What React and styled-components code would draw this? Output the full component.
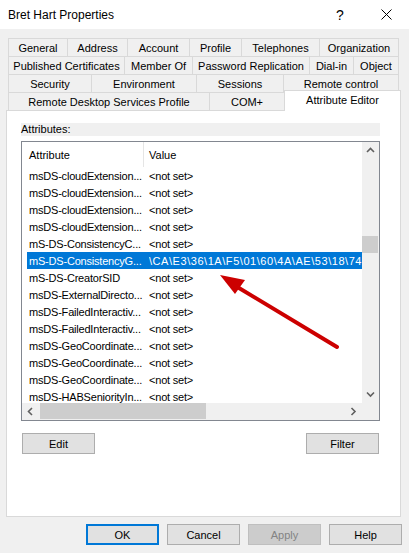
import React from "react";
import styled, { createGlobalStyle, css } from "styled-components";

const GlobalStyle = createGlobalStyle`
  html, body { margin: 0; padding: 0; background: #f0f0f0; }
  body { font-family: "Liberation Sans", Arial, sans-serif; }
`;

const tabRows = [
  [["General", 59], ["Address", 60], ["Account", 62], ["Profile", 52], ["Telephones", 78], ["Organization", 80]],
  [["Published Certificates", 116], ["Member Of", 68], ["Password Replication", 117], ["Dial-in", 44], ["Object", 46]],
  [["Security", 83], ["Environment", 105], ["Sessions", 87], ["Remote control", 116]],
  [["Remote Desktop Services Profile", 201], ["COM+", 75], ["Attribute Editor", 117, true]],
];

const rows = [
  ["msDS-cloudExtension...", "<not set>"],
  ["msDS-cloudExtension...", "<not set>"],
  ["msDS-cloudExtension...", "<not set>"],
  ["msDS-cloudExtension...", "<not set>"],
  ["mS-DS-ConsistencyC...", "<not set>"],
  ["mS-DS-ConsistencyG...", "\\CA\\E3\\36\\1A\\F5\\01\\60\\4A\\AE\\53\\18\\74", true],
  ["mS-DS-CreatorSID", "<not set>"],
  ["msDS-ExternalDirecto...", "<not set>"],
  ["msDS-FailedInteractiv...", "<not set>"],
  ["msDS-FailedInteractiv...", "<not set>"],
  ["msDS-GeoCoordinate...", "<not set>"],
  ["msDS-GeoCoordinate...", "<not set>"],
  ["msDS-GeoCoordinate...", "<not set>"],
  ["msDS-HABSeniorityIn...", "<not set>"],
];

const Chevron = ({ dir }) => {
  const paths = {
    up: "M1 5 L4.5 1.5 L8 5",
    down: "M1 1.5 L4.5 5 L8 1.5",
    left: "M5 1 L1.5 4.5 L5 8",
    right: "M1.5 1 L5 4.5 L1.5 8",
  };
  const horiz = dir === "left" || dir === "right";
  return (
    <svg width={horiz ? 7 : 9} height={horiz ? 9 : 7} viewBox={horiz ? "0 0 7 9" : "0 0 9 7"}>
      <path d={paths[dir]} fill="none" stroke="#606060" strokeWidth="1.6" />
    </svg>
  );
};

export default function App() {
  return (
    <Window>
      <GlobalStyle />
      <TitleBar>
        <Title>Bret Hart Properties</Title>
        <TitleButton>?</TitleButton>
        <TitleButton>
          <svg width="11" height="11" viewBox="0 0 11 11">
            <path d="M0.5 0.5 L10.5 10.5 M10.5 0.5 L0.5 10.5" stroke="#000" strokeWidth="1" />
          </svg>
        </TitleButton>
      </TitleBar>

      <Body>
        <TabStrip>
          {tabRows.map((row, i) => (
            <TabRow key={i}>
              {row.map(([label, w, active]) => (
                <Tab key={label} $w={w} $active={active}>{label}</Tab>
              ))}
            </TabRow>
          ))}
        </TabStrip>

        <Panel>
          <GroupLabel>Attributes:</GroupLabel>
          <ListBox>
            <ListArea>
              <Header>
                <HeaderCell $first>Attribute</HeaderCell>
                <HeaderCell>Value</HeaderCell>
              </Header>
              {rows.map(([name, value, selected], i) => (
                <Row key={i} $selected={selected}>
                  <Cell>{name}</Cell>
                  <Cell $wide={selected}>{value}</Cell>
                </Row>
              ))}
            </ListArea>
            <VScroll>
              <ArrowBox><Chevron dir="up" /></ArrowBox>
              <VTrack>
                <VThumb $offset={77} />
              </VTrack>
              <ArrowBox><Chevron dir="down" /></ArrowBox>
            </VScroll>
            <HScroll>
              <ArrowBox><Chevron dir="left" /></ArrowBox>
              <HTrack>
                <HThumb $offset={1} $size={166} />
              </HTrack>
              <ArrowBox><Chevron dir="right" /></ArrowBox>
            </HScroll>
            <Corner />
          </ListBox>
          <ActionRow>
            <Button>Edit</Button>
            <Button>Filter</Button>
          </ActionRow>
        </Panel>

        <Footer>
          <Button $default>OK</Button>
          <Button>Cancel</Button>
          <Button $disabled>Apply</Button>
          <Button>Help</Button>
        </Footer>
      </Body>

      <Annotation width="409" height="553" viewBox="0 0 409 553">
        <line x1="337" y1="347" x2="234" y2="285" stroke="#cc0000" strokeWidth="4" strokeLinecap="round" />
        <polygon points="220,275 245,280 235,294" fill="#cc0000" />
      </Annotation>
    </Window>
  );
}

const Window = styled.div`
  position: relative;
  width: 409px;
  height: 553px;
  background: #f0f0f0;
  overflow: hidden;
  display: flex;
  flex-direction: column;
`;

const TitleBar = styled.div`
  height: 29px;
  background: #fff;
  display: flex;
  align-items: center;
  padding-left: 8px;
`;

const Title = styled.div`
  flex: 1;
  font-size: 12px;
  color: #000;
`;

const TitleButton = styled.div`
  width: 46px;
  height: 29px;
  display: flex;
  align-items: center;
  justify-content: center;
  font-size: 14px;
  color: #000;
`;

const Body = styled.div`
  padding: 9px 8px 0 6px;
  display: flex;
  flex-direction: column;
`;

const TabStrip = styled.div`
  margin: 0 2px;
  width: 391px;
`;

const TabRow = styled.div`
  display: flex;
  height: 18px;
`;

const Tab = styled.div`
  box-sizing: border-box;
  flex: 0 0 ${(p) => p.$w}px;
  height: 18px;
  border-top: 1px solid #d9d9d9;
  border-left: 1px solid #d9d9d9;
  display: flex;
  align-items: center;
  justify-content: center;
  font-size: 11px;
  color: #000;
  white-space: nowrap;
  &:last-child {
    border-right: 1px solid #d9d9d9;
  }
  ${(p) =>
    p.$active &&
    css`
      height: 21px;
      margin-top: -2px;
      padding-bottom: 3px;
      background: #fff;
      position: relative;
      z-index: 1;
    `}
`;

const Panel = styled.div`
  box-sizing: border-box;
  height: 407px;
  background: #fff;
  border: 1px solid #d9d9d9;
  padding: 12px 20px 0 14px;
  display: flex;
  flex-direction: column;
`;

const GroupLabel = styled.div`
  height: 13px;
  line-height: 13px;
  background: #f0f0f0;
  font-size: 11px;
  color: #000;
`;

const ListBox = styled.div`
  box-sizing: border-box;
  margin-top: 5px;
  height: 280px;
  border: 1px solid #828790;
  background: #fff;
  display: grid;
  grid-template-columns: 1fr 17px;
  grid-template-rows: 1fr 17px;
  overflow: hidden;
`;

const ListArea = styled.div`
  overflow: hidden;
  min-width: 0;
`;

const Header = styled.div`
  height: 25px;
  display: flex;
`;

const HeaderCell = styled.div`
  display: flex;
  align-items: center;
  font-size: 11px;
  color: #000;
  ${(p) =>
    p.$first
      ? css`
          box-sizing: border-box;
          width: 122px;
          padding-left: 7px;
          border-right: 1px solid #e5e5e5;
        `
      : css`
          padding-left: 5px;
        `}
`;

const Row = styled.div`
  display: grid;
  grid-template-columns: 122px 1fr;
  height: 17px;
  margin-left: 5px;
  align-items: center;
  font-size: 11px;
  letter-spacing: -0.2px;
  color: ${(p) => (p.$selected ? "#fff" : "#000")};
  background: ${(p) => (p.$selected ? "#0078d7" : "transparent")};
`;

const Cell = styled.div`
  white-space: nowrap;
  overflow: hidden;
  letter-spacing: ${(p) => (p.$wide ? "0.55px" : "inherit")};
  &:first-child {
    padding-left: 2px;
  }
`;

const VScroll = styled.div`
  background: #f0f0f0;
  display: flex;
  flex-direction: column;
`;

const HScroll = styled.div`
  background: #f0f0f0;
  display: flex;
`;

const Corner = styled.div`
  background: #f0f0f0;
`;

const ArrowBox = styled.div`
  flex: 0 0 17px;
  height: 17px;
  display: flex;
  align-items: center;
  justify-content: center;
`;

const VTrack = styled.div`
  flex: 1;
  display: flex;
  flex-direction: column;
  padding: 0 1px 0 0;
`;

const VThumb = styled.div`
  margin-top: ${(p) => p.$offset}px;
  height: 17px;
  background: #cdcdcd;
`;

const HTrack = styled.div`
  flex: 1;
  display: flex;
  padding: 0 0 1px;
`;

const HThumb = styled.div`
  margin-left: ${(p) => p.$offset}px;
  width: ${(p) => p.$size}px;
  background: #cdcdcd;
`;

const ActionRow = styled.div`
  display: flex;
  justify-content: space-between;
  margin-top: 12px;
  padding: 0 1px;
`;

const Button = styled.div`
  box-sizing: border-box;
  width: 73px;
  height: 21px;
  display: flex;
  align-items: center;
  justify-content: center;
  font-size: 11px;
  color: #000;
  background: #e1e1e1;
  border: 1px solid #adadad;
  ${(p) =>
    p.$default &&
    css`
      border-color: #0078d7;
      box-shadow: inset 0 0 0 1px #0078d7;
    `}
  ${(p) =>
    p.$disabled &&
    css`
      background: #cccccc;
      border-color: #bfbfbf;
      color: #838383;
    `}
`;

const Footer = styled.div`
  display: flex;
  justify-content: flex-end;
  gap: 8px;
  margin-top: 7px;
  margin-right: -1px;
`;

const Annotation = styled.svg`
  position: absolute;
  left: 0;
  top: 0;
  pointer-events: none;
`;
